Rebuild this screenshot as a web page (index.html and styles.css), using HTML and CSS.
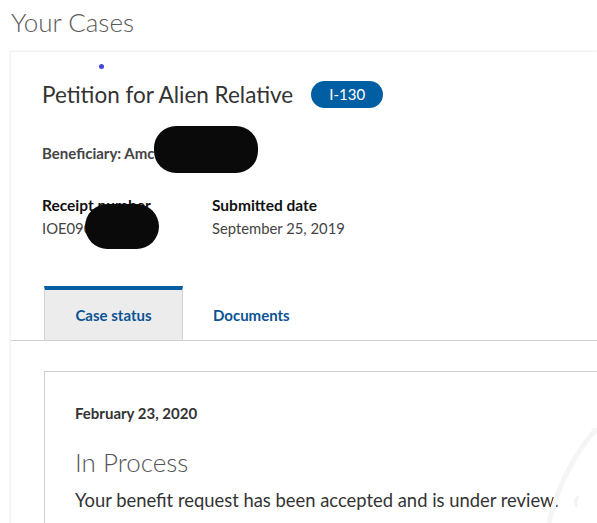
FILE: index.html
```html
<!DOCTYPE html>
<html lang="en">
<head>
<meta charset="utf-8">
<title>Your Cases</title>
<link rel="stylesheet" href="styles.css">
</head>
<body>
<h1 class="page-title">Your Cases</h1>
<div class="card">
  <span class="dot"></span>
  <div class="card-head">
    <div class="title-row">
      <h2 class="case-title">Petition for Alien Relative</h2>
      <span class="badge">I-130</span>
    </div>
    <p class="beneficiary">Beneficiary: Amc</p>
    <div class="meta">
      <div class="meta-item">
        <div class="meta-label">Receipt number</div>
        <div class="meta-value">IOE090</div>
      </div>
      <div class="meta-item">
        <div class="meta-label">Submitted date</div>
        <div class="meta-value">September 25, 2019</div>
      </div>
    </div>
  </div>
  <div class="tabs">
    <div class="tab active">Case status</div>
    <div class="tab">Documents</div>
  </div>
  <div class="panel">
    <div class="status-box">
      <div class="status-date">February 23, 2020</div>
      <h3 class="status-title">In Process</h3>
      <p class="status-text">Your benefit request has been accepted and is under review.</p>
    </div>
  </div>
  <span class="blob blob-1"></span>
  <span class="blob blob-2"></span>
</div>
<svg class="watermark" width="50" height="95" viewBox="0 0 50 95"><path d="M50 0 A 220 220 0 0 0 2 95" fill="none" stroke="#f5f5f5" stroke-width="5"/><path d="M32 68 q-6 5 -2 11" fill="none" stroke="#f3f3f3" stroke-width="3"/></svg>
</body>
</html>
```
FILE: styles.css
```css
html, body {
  margin: 0;
  padding: 0;
}
body {
  width: 597px;
  height: 523px;
  overflow: hidden;
  position: relative;
  background: #fff;
  font-family: "Lato", "Liberation Sans", sans-serif;
  color: #323a45;
}
.page-title {
  margin: 0;
  padding: 5px 0 0 11px;
  height: 51px;
  box-sizing: border-box;
  font-size: 26px;
  font-weight: 300;
  color: #5a5a5a;
  line-height: 34px;
}
.card {
  position: relative;
  margin-left: 11px;
  width: 586px;
  height: 472px;
  overflow: hidden;
  border-top: 1px solid #f1f1f1;
  box-shadow: -1px 0 2px rgba(0,0,0,0.08);
  background: #fff;
}
.dot {
  position: absolute;
  left: 88px;
  top: 12px;
  width: 5px;
  height: 5px;
  border-radius: 50%;
  background: #4447d8;
}
.card-head {
  padding: 27px 0 0 31px;
}
.title-row {
  display: flex;
  align-items: center;
  gap: 18px;
  height: 30px;
}
.case-title {
  margin: 0;
  font-size: 22.5px;
  font-weight: 400;
  color: #333;
}
.badge {
  display: inline-flex;
  align-items: center;
  justify-content: center;
  width: 72px;
  height: 27px;
  border-radius: 14px;
  background: #005ea2;
  color: #fff;
  font-size: 15px;
}
.beneficiary {
  margin: 34px 0 0;
  font-size: 15px;
  font-weight: 700;
  color: #444;
  line-height: 20px;
}
.meta {
  display: flex;
  margin-top: 31px;
}
.meta-item {
  width: 170px;
}
.meta-label {
  font-size: 15.5px;
  font-weight: 700;
  color: #111;
  line-height: 22px;
}
.meta-value {
  font-size: 14.8px;
  color: #444;
  line-height: 24px;
}
.tabs {
  display: flex;
  margin-top: 46px;
  padding-left: 33px;
  border-bottom: 1px solid #cfcfcf;
}
.tab {
  height: 50px;
  display: flex;
  align-items: center;
  justify-content: center;
  font-size: 15px;
  font-weight: 700;
  color: #0b5394;
  border-top: 4px solid transparent;
  padding: 0 30px;
}
.tab.active {
  width: 137px;
  padding: 0;
  background: #ececec;
  border-top-color: #005ea2;
  border-left: 1px solid #d2d2d2;
  border-right: 1px solid #d2d2d2;
}
.panel {
  padding: 30px 0 0 33px;
}
.status-box {
  border: 1px solid #cfcfcf;
  border-right: none;
  padding: 30px 0 20px 30px;
  min-height: 200px;
}
.status-date {
  font-size: 15px;
  font-weight: 700;
  color: #333;
  line-height: 22px;
}
.status-title {
  margin: 21px 0 0;
  font-size: 26px;
  font-weight: 300;
  color: #555;
  line-height: 34px;
}
.status-text {
  margin: 7px 0 0;
  font-size: 18.4px;
  color: #333;
  line-height: 28px;
  white-space: nowrap;
}
.blob {
  position: absolute;
  background: #0a0a0a;
  border-radius: 22px;
}
.blob-1 {
  left: 143px;
  top: 74px;
  width: 104px;
  height: 47px;
}
.blob-2 {
  left: 74px;
  top: 152px;
  width: 74px;
  height: 45px;
  border-radius: 24px;
}
.watermark {
  position: absolute;
  right: 0;
  bottom: 0;
}
```
